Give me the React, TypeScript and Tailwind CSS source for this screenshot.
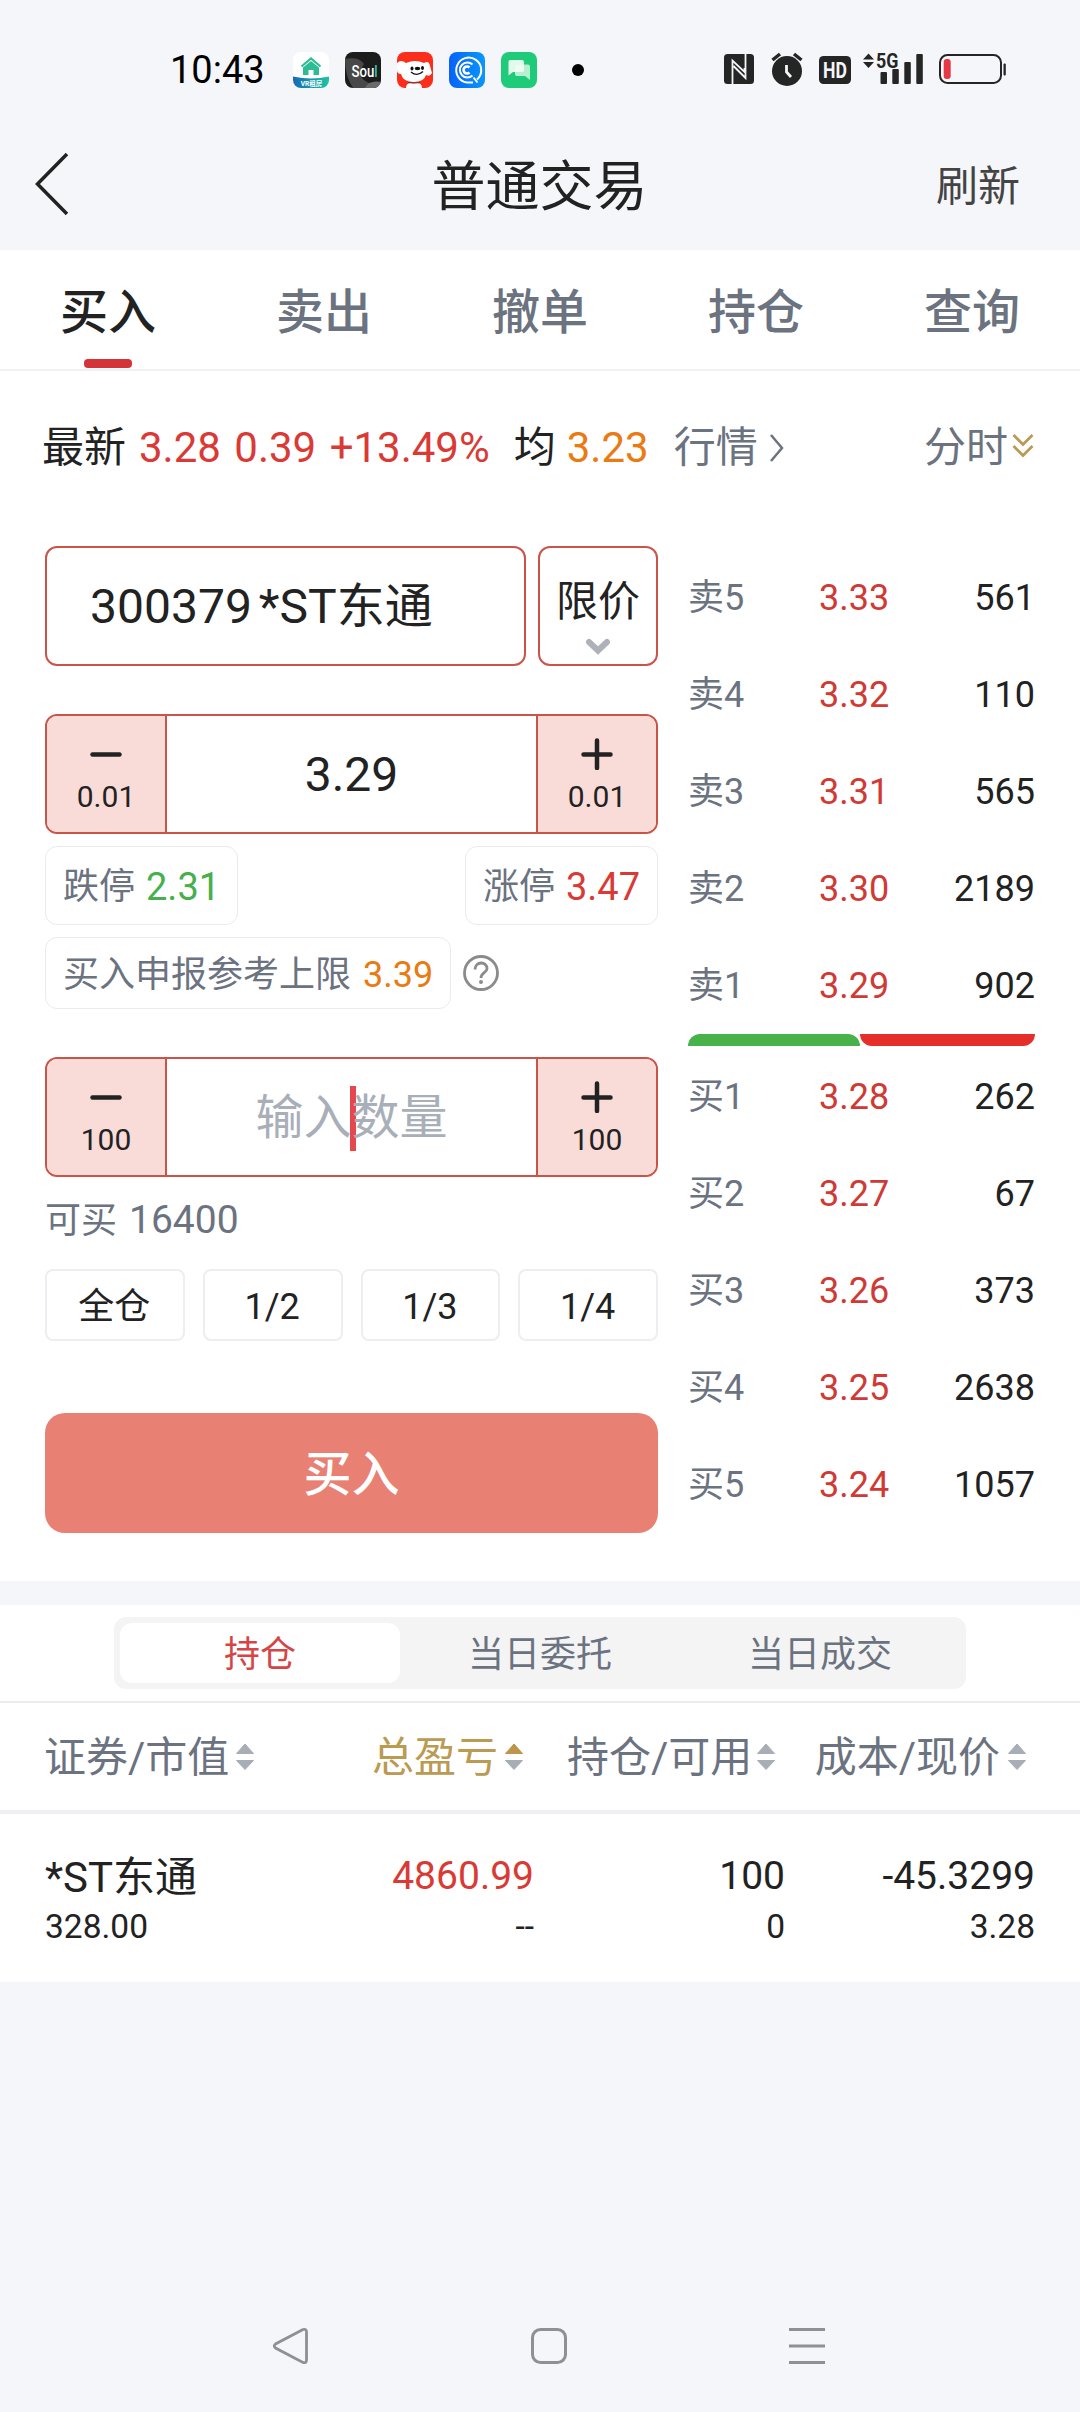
import React from "react";

const sells = [
  ["卖5", "3.33", "561"],
  ["卖4", "3.32", "110"],
  ["卖3", "3.31", "565"],
  ["卖2", "3.30", "2189"],
  ["卖1", "3.29", "902"],
];
const buys = [
  ["买1", "3.28", "262"],
  ["买2", "3.27", "67"],
  ["买3", "3.26", "373"],
  ["买4", "3.25", "2638"],
  ["买5", "3.24", "1057"],
];

function AppIcons() {
  return (
    <div className="flex gap-4">
      <svg width="36" height="36" viewBox="0 0 36 36">
        <defs>
          <clipPath id="r1"><rect width="36" height="36" rx="8" /></clipPath>
          <linearGradient id="g1" x1="0" x2="1"><stop offset="0" stopColor="#1769b5" /><stop offset="1" stopColor="#1cc4a4" /></linearGradient>
        </defs>
        <g clipPath="url(#r1)">
          <rect width="36" height="36" fill="#fff" />
          <path d="M0 24.5Q18 28.500 36 24.500V36H0Z" fill="url(#g1)" />
          <path d="M8.500 14.500L18 6.500L27.500 14.500" fill="none" stroke="#2cbd94" strokeWidth="2.200" />
          <path d="M10 15.500L18 9L26 15.500V23H20.500V18H15.500V23H10Z" fill="#2cbd94" />
          <text x="18.500" y="33.800" textAnchor="middle" fontSize="6.500" fontWeight="700" fill="#fff" className="font-['Roboto','Noto_Sans_CJK_SC',sans-serif]">VR租房</text>
        </g>
      </svg>
      <svg width="36" height="36" viewBox="0 0 36 36">
        <defs><clipPath id="r2"><rect width="36" height="36" rx="8" /></clipPath></defs>
        <g clipPath="url(#r2)">
          <rect width="36" height="36" fill="#1c1c1c" />
          <path d="M0 7Q14 4 19 12Q11 24 22 30Q30 34 36 32V36H8Q0 24 0 7Z" fill="#484848" />
          <path d="M20 36Q24 28 36 30V36Z" fill="#6a6a6a" />
        </g>
        <g transform="translate(6.500 24.500) scale(0.800 1)">
          <text fontSize="16.500" fontWeight="500" fill="#fff" className="font-['Roboto',sans-serif]">Sou<tspan fill="#27c9ba">l</tspan></text>
        </g>
      </svg>
      <svg width="36" height="36" viewBox="0 0 36 36">
        <defs><clipPath id="r3"><rect width="36" height="36" rx="8" /></clipPath></defs>
        <g clipPath="url(#r3)">
          <rect width="36" height="36" fill="#fb2d1b" />
          <path d="M0 11Q4 7 9 11Q18 7 27 11Q32 8 33 14L35 21Q33 25 29 23Q27 30 17 30Q6 30 4 22Q0 22 0 18Z" fill="#fff" />
          <path d="M9 36Q9 31 14 31H20Q25 31 25 36Z" fill="#fff" />
          <ellipse cx="15" cy="16.500" rx="1.500" ry="2" fill="#111" />
          <ellipse cx="25.500" cy="16" rx="1.500" ry="2" fill="#111" />
          <ellipse cx="20.500" cy="16.500" rx="2.800" ry="1.700" fill="#111" />
          <path d="M14 20Q20 25 26 19.500" fill="none" stroke="#111" strokeWidth="1.300" />
          <path d="M11 30.500Q17 32 23 30.500" fill="none" stroke="#333" strokeWidth="0.800" />
        </g>
      </svg>
      <svg width="36" height="36" viewBox="0 0 36 36" fill="none" stroke="#fff" strokeWidth="2">
        <defs><linearGradient id="g4" x1="0" x2="1"><stop offset="0" stopColor="#0862f8" /><stop offset="1" stopColor="#0a97fb" /></linearGradient></defs>
        <rect width="36" height="36" rx="8" fill="url(#g4)" stroke="none" />
        <path d="M28 27.500A12.500 12.500 0 1 0 18 30.500H24M24.500 25.500L28.500 30.500" />
        <path d="M23.500 23.500A7.500 7.500 0 1 1 23.500 12.500" />
        <path d="M20.500 20.500A3.500 3.500 0 1 1 20.500 15.500" strokeWidth="2.600" />
      </svg>
      <svg width="36" height="36" viewBox="0 0 36 36">
        <rect width="36" height="36" rx="8" fill="#1dcb78" />
        <path d="M9 8H21Q23 8 23 10V18Q23 20 21 20H12L7.500 23.500V10Q7.500 8 9 8Z" fill="#e2faec" />
        <path d="M16 12.500H27Q29 12.500 29 14.500V28L24 24H16Q14 24 14 22V14.500Q14 12.500 16 12.500Z" fill="#c9f3dc" opacity="0.900" />
        <path d="M14 14.500Q14 12.500 16 12.500H23V18Q23 20 21 20H14Z" fill="#f5fffa" opacity="0.800" />
      </svg>
    </div>
  );
}

function SystemIcons() {
  return (
    <svg width="286" height="36" viewBox="0 0 286 36" fill="#232624" className="overflow-visible">
      <rect x="1" y="2" width="30" height="30" rx="3.500" />
      <path d="M9.500 32V8.500L21.500 20V16M22.500 2V26L10.500 14" fill="none" stroke="#f5f6fa" strokeWidth="1.800" />
      <circle cx="64" cy="19" r="15" />
      <path d="M49.500 8L57 2M71 2L78.500 8" stroke="#232624" strokeWidth="3.500" />
      <path d="M63.500 13V20L68 25" fill="none" stroke="#f5f6fa" strokeWidth="2.800" />
      <rect x="96" y="4" width="32" height="28" rx="4.500" />
      <g transform="translate(112 25.800) scale(0.800 1)">
        <text textAnchor="middle" fontSize="22" fontWeight="700" fill="#f5f6fa" className="font-['Roboto',sans-serif]">HD</text>
      </g>
      <path d="M140 7.500L145.500 1.500L151 7.500ZM140 10L145.500 16L151 10Z" />
      <g transform="translate(153 15.500) scale(0.850 1)">
        <text fontSize="21" fontWeight="700" className="font-['Roboto',sans-serif]">5G</text>
      </g>
      <rect x="157.500" y="20" width="6.500" height="12" rx="1" />
      <rect x="169.300" y="17" width="6.500" height="15" rx="1" />
      <rect x="181.300" y="10" width="6.500" height="22" rx="1" />
      <rect x="193.300" y="2" width="6.500" height="30" rx="1" />
      <rect x="217" y="3" width="61" height="28" rx="7.500" fill="none" stroke="#232624" strokeWidth="2" />
      <rect x="220.700" y="7" width="7" height="20" rx="3" fill="#e63946" />
      <rect x="280.500" y="11.500" width="2.300" height="12" rx="1" />
    </svg>
  );
}

function Stepper({ step, children }: { step: string; children: React.ReactNode }) {
  return (
    <div className="flex h-[120px] w-[613px] overflow-hidden rounded-xl border-2 border-[#c95549]">
      <div className="flex w-[120px] flex-col items-center border-r-2 border-[#c95549] bg-[#f9dcd8] pt-[22px]">
        <svg width="32" height="32" viewBox="0 0 32 32"><path d="M2.500 16.500H29.500" stroke="#222" strokeWidth="4.500" strokeLinecap="round" /></svg>
        <span className="mt-[9px] text-[30px] leading-[35px]">{step}</span>
      </div>
      <div className="flex flex-1 items-center justify-center pt-0.5 text-5xl">{children}</div>
      <div className="flex w-[120px] flex-col items-center border-l-2 border-[#c95549] bg-[#f9dcd8] pt-[22px]">
        <svg width="32" height="32" viewBox="0 0 32 32"><path d="M2.500 16.500H29.500M16 2.500V30" stroke="#222" strokeWidth="4.500" strokeLinecap="round" /></svg>
        <span className="mt-[9px] text-[30px] leading-[35px]">{step}</span>
      </div>
    </div>
  );
}

function BookRow({ row }: { row: string[] }) {
  return (
    <div className="flex h-[97px] items-center text-4xl">
      <span className="w-[131px] text-[#6b7280]">{row[0]}</span>
      <span className="text-[#d03a35]">{row[1]}</span>
      <span className="flex-1 text-right">{row[2]}</span>
    </div>
  );
}

function Sort({ active = false }: { active?: boolean }) {
  return (
    <svg width="20" height="28" viewBox="0 0 20 28" className="shrink-0">
      <path d="M1.500 10.500L10 1L18.500 10.500Z" fill={active ? "#bd954b" : "#a9adb5"} stroke={active ? "#bd954b" : "#a9adb5"} strokeLinejoin="round" />
      <path d="M1.500 17.500L10 26.500L18.500 17.500Z" fill="#a9adb5" stroke="#a9adb5" strokeLinejoin="round" />
    </svg>
  );
}

export default function App() {
  return (
    <div lang="zh-CN" className="flex h-[2412px] w-[1080px] flex-col overflow-hidden bg-[#f5f6fa] font-['Roboto','Noto_Sans_CJK_SC',sans-serif] whitespace-nowrap text-[#222]">
      {/* Status bar */}
      <div className="flex h-[120px] items-center pb-5 pl-[170px]">
        <span className="w-[123px] pt-10 text-[38px] leading-none text-black">10:43</span>
        <div className="pt-10"><AppIcons /></div>
        <div className="mt-[40px] ml-[35px] size-3 rounded-full bg-black" />
        <div className="ml-[139px] pt-10"><SystemIcons /></div>
      </div>

      {/* Title bar */}
      <div className="grid h-[130px] grid-cols-[1fr_auto_1fr] items-center pr-[60px] pl-[33px]">
        <svg width="38" height="66" viewBox="0 0 38 66" className="mb-0.5"><path d="M34 3L4.500 33L34 63" fill="none" stroke="#222" strokeWidth="3.500" /></svg>
        <span className="ml-[26px] pt-1 text-[54px]">普通交易</span>
        <span className="pt-0.5 text-right text-[42px] text-[#444]">刷新</span>
      </div>

      {/* Tabs */}
      <div className="grid h-[121px] grid-cols-5 border-b-2 border-[#f0f1f3] bg-white text-center text-5xl leading-[125px] font-medium text-[#6b7280]">
        <div className="relative h-[119px] text-[#222]">
          买入
          <div className="absolute bottom-px left-[84px] h-[9px] w-12 rounded bg-[#d43438]" />
        </div>
        <div>卖出</div>
        <div>撤单</div>
        <div>持仓</div>
        <div>查询</div>
      </div>

      {/* Quote summary */}
      <div className="flex h-[151px] items-center bg-white pt-0.5 pr-[46px] pl-[42px] text-[42px]">
        <span>最新</span>
        <span className="ml-[13px] text-[#d93a35] [word-spacing:3px]">3.28 0.39 +13.49%</span>
        <span className="ml-6">均</span>
        <span className="ml-[11px] text-[#ea7a12]">3.23</span>
        <span className="ml-[25px] text-[#6b7280]">行情</span>
        <svg width="16" height="30" viewBox="0 0 16 30" className="ml-[11px]"><path d="M2 2L13 15L2 28" fill="none" stroke="#6b7280" strokeWidth="2.500" /></svg>
        <span className="ml-auto text-[#6b7280]">分时</span>
        <svg width="22" height="26" viewBox="0 0 22 26" className="mb-1 ml-1"><path d="M1.500 2L11 11.500L20.500 2M1.500 13L11 22.500L20.500 13" fill="none" stroke="#b99b56" strokeWidth="2.800" /></svg>
      </div>

      {/* Order form and order book */}
      <div className="flex h-[1059px] bg-white pt-6 pr-[45px] pl-[45px]">
        <div className="w-[613px]">
          <div className="flex justify-between">
            <div className="flex h-[120px] w-[481px] items-center rounded-xl border-2 border-[#c95549] pt-0.5 pl-[43px] text-5xl">
              300379<span className="ml-[7px]">*ST东通</span>
            </div>
            <div className="flex h-[120px] w-[120px] flex-col items-center rounded-xl border-2 border-[#c95549] pt-7 text-[42px] leading-[52px]">
              限价
              <svg width="26" height="18" viewBox="0 0 26 18" className="mt-2.5"><path d="M4 4L13 12.500L22 4" fill="none" stroke="#aeb1b8" strokeWidth="6" strokeLinecap="round" /></svg>
            </div>
          </div>
          <div className="mt-12"><Stepper step="0.01">3.29</Stepper></div>
          <div className="mt-3 flex justify-between text-4xl text-[#6b7280]">
            <div className="flex h-[79px] items-center rounded-xl border border-[#e9ebef] px-[17px] pt-[3px]">跌停<span className="ml-[11px] text-[38px] text-[#46b04c]">2.31</span></div>
            <div className="flex h-[79px] items-center rounded-xl border border-[#e9ebef] px-[17px] pt-[3px]">涨停<span className="ml-[11px] text-[38px] text-[#d93a35]">3.47</span></div>
          </div>
          <div className="mt-3 flex items-center text-4xl text-[#6b7280]">
            <div className="flex h-[72px] w-[406px] items-center rounded-xl border border-[#e9ebef] pt-[3px] pl-[17px]">买入申报参考上限<span className="ml-3 text-[#ea7a12]">3.39</span></div>
            <svg width="38" height="38" viewBox="0 0 38 38" fill="none" stroke="#8b8b8b" strokeWidth="2.800" className="ml-[11px]">
              <circle cx="19" cy="19" r="16.500" />
              <path d="M13 15.500C13 7 25 7 25 14.500C25 19 19 18.500 19 24" strokeWidth="2.800" />
              <circle cx="19" cy="28" r="2" fill="#8b8b8b" stroke="none" />
            </svg>
          </div>
          <div className="mt-12">
            <Stepper step="100">
              <span className="relative text-[#a9afb9]">
                <span className="absolute -top-2 left-[95px] h-[65px] w-1.5 bg-[#e4474c]" />
                <span className="relative">输入数量</span>
              </span>
            </Stepper>
          </div>
          <div className="mt-4 flex h-[52px] items-center pt-[3px] text-4xl text-[#6b7280]">可买<span className="ml-3 text-[39px]">16400</span></div>
          <div className="mt-6 grid grid-cols-4 gap-[18px] text-4xl">
            {["全仓", "1/2", "1/3", "1/4"].map((t) => (
              <div key={t} className="flex h-[72px] items-center justify-center rounded-lg border-2 border-[#eceef1] pt-[3px] pr-px">{t}</div>
            ))}
          </div>
          <div className="mt-[72px] flex h-[120px] items-center justify-center rounded-[20px] bg-[#e88073] pt-[3px] text-5xl font-medium text-white">买入</div>
        </div>
        <div className="ml-[30px] w-[347px] pt-[3px]">
          {sells.map((r) => <BookRow key={r[0]} row={r} />)}
          <div className="mb-0.5 flex h-3">
            <div className="w-[172px] rounded-t-xl bg-[#48b24a]" />
            <div className="flex-1 rounded-b-xl bg-[#e62f2b]" />
          </div>
          {buys.map((r) => <BookRow key={r[0]} row={r} />)}
        </div>
      </div>

      {/* Segmented control */}
      <div className="mt-6 flex h-[98px] items-start justify-center border-b-2 border-[#ebecf0] bg-white pt-3">
        <div className="grid h-[72px] w-[852px] grid-cols-3 rounded-xl bg-[#f4f4f4] p-1.5 text-center text-4xl leading-[65px] text-[#6b7280]">
          <div className="h-[60px] rounded-xl bg-white text-[#d64545]">持仓</div>
          <div>当日委托</div>
          <div>当日成交</div>
        </div>
      </div>

      {/* Position table */}
      <div className="flex h-[111px] items-center border-b-4 border-[#eef0f4] bg-white pr-[53px] pl-[44px] text-[42px] text-[#6b7280]">
        <div className="flex w-[328px] items-center gap-[6px]"><span className="pt-px">证券/市值</span><Sort /></div>
        <div className="flex w-[195px] items-center gap-[6px] text-[#bb9a52]"><span className="pt-px">总盈亏</span><Sort active /></div>
        <div className="flex flex-1 items-center gap-[4px]"><span className="pt-px">持仓/可用</span><Sort /></div>
        <div className="flex items-center gap-[7px]"><span className="pt-px">成本/现价</span><Sort /></div>
      </div>
      <div className="grid h-[168px] grid-cols-[240px_249px_251px_250px] content-start bg-white px-[45px] pt-[34px] text-right text-[39px] leading-[56px]">
        <div className="h-14 text-left text-[42px] leading-[60px]">*ST东通</div>
        <div className="text-[#d93a35]">4860.99</div>
        <div>100</div>
        <div>-45.3299</div>
        <div className="text-left text-[33.5px] leading-[46px]">328.00</div>
        <div className="text-[33.5px] leading-[46px]">--</div>
        <div className="text-[33.5px] leading-[46px]">0</div>
        <div className="text-[33.5px] leading-[46px]">3.28</div>
      </div>

      {/* System navigation */}
      <div className="mt-auto flex h-[132px] items-center justify-between pr-[254px] pl-[271px]">
        <svg width="38" height="40" viewBox="0 0 38 40"><path d="M32 3.500L4.500 18Q2 20 4.500 22L32 36.500Q35.500 37.500 35.500 34V6Q35.500 2.500 32 3.500Z" fill="none" stroke="#8f9093" strokeWidth="2.800" /></svg>
        <svg width="38" height="38" viewBox="0 0 38 38"><rect x="2.500" y="2.500" width="33" height="33" rx="8" fill="none" stroke="#8f9093" strokeWidth="3" /></svg>
        <svg width="38" height="38" viewBox="0 0 38 38"><path d="M1 2.500H37M1 19H37M1 35.500H37" stroke="#8f9093" strokeWidth="3" /></svg>
      </div>
    </div>
  );
}
